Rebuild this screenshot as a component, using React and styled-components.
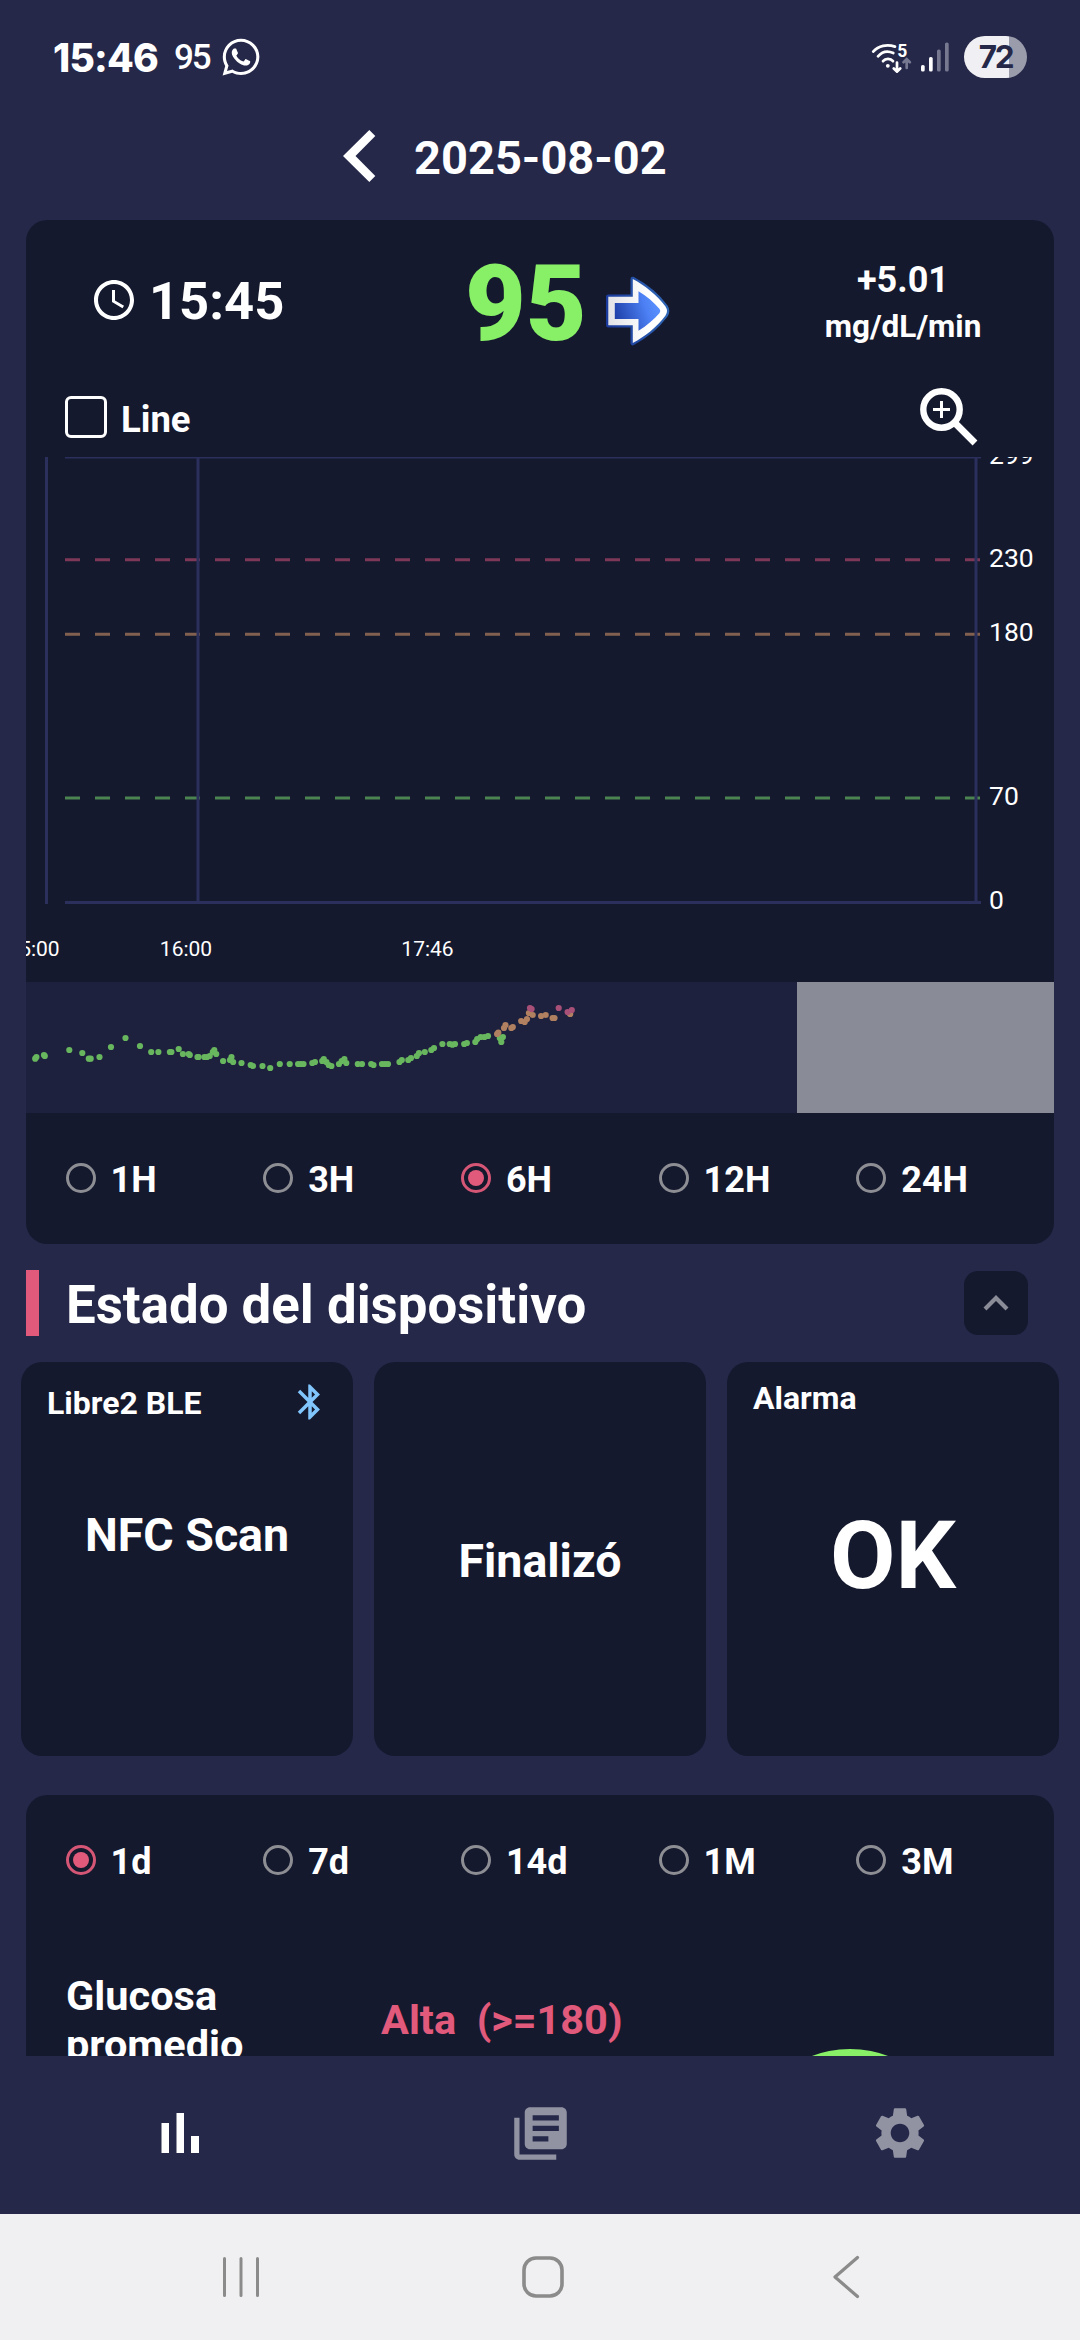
import { useState } from 'react'
import styled, { createGlobalStyle } from 'styled-components'
import { FaWhatsapp } from 'react-icons/fa'
import { MdAccessTime, MdBluetooth, MdLibraryBooks, MdSettings } from 'react-icons/md'

const GlobalStyle = createGlobalStyle`
  * {
    box-sizing: border-box;
  }

  body {
    margin: 0;
    background-color: #252849;
    color: #fff;
    font-family: Roboto, "Liberation Sans", sans-serif;
  }

  svg {
    display: block;
    flex-shrink: 0;
  }
`

const Screen = styled.div`
  display: flex;
  flex-direction: column;
  width: 1080px;
  height: 2340px;
  overflow: hidden;
  background-color: #252849;
`

/* ---------- status bar ---------- */

const StatusBar = styled.div`
  display: flex;
  justify-content: space-between;
  align-items: center;
  height: 114px;
  padding: 0 53px 0 53px;
  flex-shrink: 0;
`

const StatusGroup = styled.div`
  display: flex;
  align-items: center;
`

const StatusTime = styled.span`
  width: 121px;
  font-family: Inter, sans-serif;
  font-size: 39px;
  font-weight: 800;
  letter-spacing: -0.8px;
`

const StatusValue = styled.span`
  width: 46px;
  font-size: 35px;
  font-weight: 500;
  letter-spacing: -2.2px;
`

const Battery = styled.div`
  width: 63px;
  height: 42px;
  margin-left: 14px;
  border-radius: 21px;
  background: linear-gradient(to right, #f0f0f4 45px, #9a9bab 45px);
  color: #252849;
  font-family: Inter, sans-serif;
  font-size: 31.5px;
  font-weight: 700;
  line-height: 41px;
  letter-spacing: -2.4px;
  text-align: center;
`

/* ---------- date header ---------- */

const DateBar = styled.header`
  display: flex;
  align-items: center;
  height: 106px;
  padding: 0 0 22px 343px;
  gap: 38px;
  flex-shrink: 0;
`

const DateText = styled.h1`
  margin: 4px 0 0;
  font-size: 47px;
  font-weight: 700;
  line-height: 56px;
`

/* ---------- scroll area ---------- */

const Content = styled.main`
  display: flex;
  flex-direction: column;
  height: 1836px;
  overflow: hidden;
  flex-shrink: 0;
`

const Panel = styled.section`
  margin: 0 26px;
  border-radius: 21px;
  background-color: #15192e;
  overflow: hidden;
  flex-shrink: 0;
`

const Reading = styled.div`
  display: flex;
  align-items: center;
  height: 160px;
  padding-left: 64px;
`

const ReadingTime = styled.div`
  display: flex;
  align-items: center;
  gap: 11px;
  width: 375px;
  font-size: 52.5px;
  font-weight: 700;
  line-height: 60px;
`

const TimeText = styled.span`
  padding-top: 2px;
`

const ReadingValue = styled.div`
  display: flex;
  align-items: center;
  gap: 17px;
  width: 320px;
  padding-top: 10px;
  color: #87f067;
  font-size: 105px;
  font-weight: 900;
  line-height: 110px;

  svg {
    margin-top: 11px;
  }
`

const ReadingChange = styled.div`
  display: flex;
  flex-direction: column;
  align-items: center;
  width: 236px;
  padding-top: 5px;
  font-weight: 700;
`

const Change = styled.span`
  font-size: 36px;
  line-height: 48px;
`

const Unit = styled.span`
  font-size: 31.5px;
  line-height: 46px;
`

const ChartTools = styled.div`
  display: flex;
  justify-content: space-between;
  align-items: center;
  height: 77px;
  padding: 0 76px 3px 39px;
`

const CheckLabel = styled.label`
  display: flex;
  align-items: center;
  gap: 14px;
  font-size: 36.5px;
  font-weight: 700;
`

const CheckBox = styled.span`
  width: 42px;
  height: 42px;
  border: 3px solid #fff;
  border-radius: 6px;
`

const CheckText = styled.span`
  padding-top: 5px;
`

const Overview = styled.div`
  display: flex;
  justify-content: space-between;
  height: 131px;
  background-color: #1e213e;
`

const OverviewWindow = styled.div`
  width: 257px;
  background-color: #898b96;
`

const RadioRow = styled.div`
  display: flex;
  height: 131px;
  padding-left: 39.5px;
`

const RadioOption = styled.button`
  display: flex;
  align-items: center;
  gap: 15px;
  width: 197.8px;
  padding: 0;
  border: none;
  background: none;
  color: #fff;
  font-family: inherit;
  font-size: 36px;
  font-weight: 700;
  cursor: pointer;
`

const RadioLabel = styled.span`
  padding-top: 2px;
`

const RadioMark = styled.span`
  display: flex;
  align-items: center;
  justify-content: center;
  width: 30px;
  height: 30px;
  margin-top: -2px;
  border: 3px solid ${props => (props.$on ? '#d65676' : '#8d8e94')};
  border-radius: 50%;

  &::after {
    content: '';
    width: 16px;
    height: 16px;
    border-radius: 50%;
    background-color: ${props => (props.$on ? '#e15a7c' : 'transparent')};
  }
`

/* ---------- device state ---------- */

const SectionHeader = styled.div`
  display: flex;
  align-items: center;
  height: 66px;
  margin: 26px 52px 26px 26px;
  border-left: 13px solid #e15a7c;
  flex-shrink: 0;
`

const SectionTitle = styled.h2`
  flex: 1;
  margin: 4px 0 0 27px;
  font-size: 52.8px;
  font-weight: 700;
  line-height: 62px;
`

const CollapseButton = styled.button`
  display: flex;
  align-items: center;
  justify-content: center;
  width: 64px;
  height: 64px;
  padding: 0;
  border: none;
  border-radius: 14px;
  background-color: #15192e;
  cursor: pointer;
`

const DeviceGrid = styled.div`
  display: grid;
  grid-template-columns: repeat(3, 332px);
  gap: 21px;
  height: 394px;
  margin: 0 21px 39px;
  flex-shrink: 0;
`

const DeviceCard = styled.div`
  display: flex;
  flex-direction: column;
  border-radius: 21px;
  background-color: #15192e;
  text-align: center;
  font-weight: 700;
`

const DeviceTop = styled.div`
  display: flex;
  justify-content: space-between;
  align-items: center;
  height: ${props => props.$height}px;
  padding: 0 22px 0 26px;
  font-size: 32px;

  svg {
    margin-top: -3px;
  }
`

const DeviceText = styled.div`
  margin-top: ${props => props.$top}px;
  font-size: ${props => props.$size || 46.5}px;
  line-height: 60px;
`

/* ---------- statistics ---------- */

const Stats = styled.div`
  display: grid;
  grid-template-columns: 315px 355px 1fr;
  height: 300px;
  padding: 45px 0 0 40px;
  font-size: 41.5px;
  font-weight: 700;
  line-height: 49px;
`

const StatName = styled.div`
  width: 220px;
`

const StatRange = styled.div`
  padding-top: 24px;
  color: #e15a7c;
  white-space: pre;
`

const Pie = styled.div`
  width: 214px;
  height: 214px;
  margin: 78px 0 0 7px;
  border-radius: 50%;
  background-color: #87f067;
`

/* ---------- bottom bars ---------- */

const TabBar = styled.nav`
  display: grid;
  grid-template-columns: repeat(3, 1fr);
  justify-items: center;
  height: 158px;
  padding-top: 46px;
  flex-shrink: 0;
  color: #9193a3;
`

const BarsTab = styled.div`
  padding-top: 11px;
`

const SystemBar = styled.div`
  display: flex;
  align-items: center;
  justify-content: space-between;
  height: 126px;
  padding: 0 220px 0 222px;
  flex-shrink: 0;
  background-color: #f0f0f2;
`

const ranges = ['1H', '3H', '6H', '12H', '24H']
const periods = ['1d', '7d', '14d', '1M', '3M']

const limits = [
  { value: 230, color: '#7d3858' },
  { value: 180, color: '#82604f' },
  { value: 70, color: '#4b8450' },
]

const history = [
  {
    color: '#68b75f',
    points: [
      [9.2, 76.7], [10.4, 75], [18, 73], [18.8, 74], [43.3, 68], [56.3, 71], [62.8, 76.7], [64.7, 76.7],
      [73.5, 75], [85, 65], [99.5, 56], [114, 64], [125.2, 70], [132.4, 70], [143.9, 70], [145.4, 70],
      [152.7, 67], [156.9, 72], [162.7, 72], [163.8, 73], [171.5, 75], [172.6, 75], [178.4, 75], [181, 75],
      [183.7, 74], [186.8, 70], [188.3, 68], [190.2, 72], [197.1, 79], [204, 78], [205.5, 75], [207.1, 80],
      [215.5, 81], [224.7, 83], [227, 84], [236.5, 84], [244.2, 86], [253.8, 82], [263.7, 82], [272.1, 82],
      [274.8, 82], [277.5, 82], [286.3, 81], [289, 80], [296.2, 79], [297.8, 77], [300.4, 80], [302.7, 83],
      [305.4, 84], [313, 82], [315.7, 79], [318.4, 77], [320.3, 81], [331.8, 82], [336, 82], [345.2, 82],
      [347.5, 83], [356, 82], [359, 82], [362, 82], [373.5, 80], [375.8, 78], [382.3, 78], [385, 76],
      [390.8, 74], [393, 71], [398.8, 70], [405.3, 68], [408, 66], [416.4, 62], [423.7, 62], [426.4, 62.7],
      [429, 62], [438.2, 62], [440.9, 61], [449.3, 60], [451.2, 57], [454.7, 55], [458.5, 55], [462, 54],
      [473.8, 56], [476.9, 55], [475.3, 60],
    ],
  },
  {
    color: '#b08060',
    points: [
      [471.1, 52], [472.3, 50.7], [478, 46], [479.5, 43], [485.3, 46], [486.8, 45], [495.2, 39], [498.7, 40],
      [501, 37], [502.9, 31], [506.7, 33], [515.1, 34], [519.7, 33], [526.6, 36], [528.5, 36], [543.5, 31],
      [544.2, 32],
    ],
  },
  {
    color: '#a85078',
    points: [[504, 26], [505.6, 27], [532.7, 26], [541.6, 30], [545.8, 28]],
  },
]

// pixel row of a glucose value in the main chart
const toY = value => 445.3 - value * 1.4893

const WifiIcon = () => (
  <svg width="50" height="32" viewBox="0 -1 50 32" fill="none" stroke="#fff" strokeWidth="2.7" strokeLinecap="round">
    <path d="M3.2 9.6C8.5 3.5 17 2 25 4.6" />
    <path d="M8 14.3C12 9.7 17.5 8.4 23.3 11" />
    <path d="M13 19.2C15.5 16 20.5 16 23 19.2" />
    <circle cx="17.8" cy="23.8" r="1.9" fill="#fff" stroke="none" />
    <path d="M27 20.5V29M23.8 26.5L27 29.600L30.2 26.5" />
    <path d="M36.7 26V18M33.5 20.2L36.7 17.2L39.9 20.2" stroke="#777990" />
    <text x="27.3" y="14.7" fill="#fff" stroke="none" fontSize="17.5" fontWeight="700">5</text>
  </svg>
)

const SignalIcon = () => (
  <svg width="30" height="30" viewBox="0 0 30 30">
    <rect x="1" y="23" width="3.7" height="6.5" rx="1.6" fill="#fff" />
    <rect x="9" y="15" width="3.7" height="14.5" rx="1.6" fill="#fff" />
    <rect x="17" y="7.5" width="3.7" height="22" rx="1.6" fill="#777990" />
    <rect x="25" y="0.5" width="3.7" height="29" rx="1.6" fill="#777990" />
  </svg>
)

const BackChevron = () => (
  <svg width="33" height="52" viewBox="0 0 33 52">
    <path d="M26.3 0L0 26L26.3 52L32.3 46L12.5 26L32.3 6Z" fill="#fff" />
  </svg>
)

const TrendArrow = () => (
  <svg width="67" height="72" viewBox="0 0 67 72">
    <defs>
      <linearGradient id="rim" x1="0" y1="0.6" x2="1" y2="0.4">
        <stop offset="0" stopColor="#1a3a9c" />
        <stop offset="1" stopColor="#2f66b4" />
      </linearGradient>
      <linearGradient id="frame" x1="0" y1="0" x2="1" y2="0">
        <stop offset="0" stopColor="#e2e3e8" />
        <stop offset="0.7" stopColor="#fff" />
      </linearGradient>
      <linearGradient id="body" x1="0" y1="0.7" x2="1" y2="0.4">
        <stop offset="0" stopColor="#1d3ea6" />
        <stop offset="0.7" stopColor="#4c80f4" />
        <stop offset="1" stopColor="#5b92ff" />
      </linearGradient>
    </defs>
    <path
      d="M4.3 21.7H28.8V4C41 10.5 53 20 61.5 31.5Q64.5 36 61.5 40.5C53 52 41 61.5 28.8 68V50.3H4.3Z"
      fill="url(#frame)"
      stroke="url(#rim)"
      strokeWidth="4.6"
      strokeLinejoin="round"
      paintOrder="stroke"
    />
    <path
      d="M10.8 28H34.5V16.3C43 21.5 50 27.5 55.6 34Q57 36 55.6 38C50 44.5 43 50.5 34.5 55.7V44H10.8Z"
      fill="url(#body)"
    />
  </svg>
)

const ZoomInIcon = () => (
  <svg width="58" height="58" viewBox="0 0 58 58" fill="none" stroke="#fff">
    <circle cx="21.5" cy="21.5" r="18.2" strokeWidth="6.4" />
    <path d="M13 21.5H30M21.5 13V30" strokeWidth="3" />
    <path d="M36 36L55 55" strokeWidth="6.8" />
  </svg>
)

const BarsIcon = () => (
  <svg width="38" height="41" viewBox="0 0 38 41" fill="#fff">
    <rect x="0.5" y="10" width="7.5" height="30" />
    <rect x="15.5" y="0" width="7.5" height="40" />
    <rect x="30" y="23" width="8" height="17" />
  </svg>
)

const GlucoseChart = () => (
  <svg width="1028" height="525" viewBox="0 0 1028 525" fontFamily="Roboto, sans-serif">
    {limits.map(limit => (
      <line
        key={limit.value}
        x1="39"
        x2="954"
        y1={toY(limit.value)}
        y2={toY(limit.value)}
        stroke={limit.color}
        strokeWidth="3"
        strokeDasharray="15 15"
      />
    ))}
    <g stroke="#2b2f5c" strokeWidth="3">
      <path d="M39 0H955M39 445.5H955" />
      <path d="M20.5 0V447M172 0V445M950 0V445" />
    </g>
    <g fill="#fff" fontSize="26.5">
      {[299, ...limits.map(limit => limit.value), 0].map(value => (
        <text key={value} x="963" y={toY(value) + 7}>{value}</text>
      ))}
    </g>
    <g fill="#fff" fontSize="21" textAnchor="middle">
      <text x="7.5" y="498.5">15:00</text>
      <text x="160" y="498.5">16:00</text>
      <text x="401.5" y="498.5">17:46</text>
    </g>
  </svg>
)

const HistoryDots = () => (
  <svg width="771" height="131" viewBox="0 0 771 131">
    {history.map(series => (
      <g key={series.color} fill={series.color}>
        {series.points.map(([x, y]) => <circle key={`${x}-${y}`} cx={x} cy={y} r="3.1" />)}
      </g>
    ))}
  </svg>
)

const RadioGroup = ({ options, value, onChange }) => (
  <RadioRow>
    {options.map(option => (
      <RadioOption key={option} onClick={() => onChange(option)}>
        <RadioMark $on={option === value} />
        <RadioLabel>{option}</RadioLabel>
      </RadioOption>
    ))}
  </RadioRow>
)

const App = () => {
  const [range, setRange] = useState('6H')
  const [period, setPeriod] = useState('1d')

  return (
    <Screen>
      <GlobalStyle />
      <StatusBar>
        <StatusGroup>
          <StatusTime>15:46</StatusTime>
          <StatusValue>95</StatusValue>
          <FaWhatsapp size={42} />
        </StatusGroup>
        <StatusGroup>
          <WifiIcon />
          <SignalIcon />
          <Battery>72</Battery>
        </StatusGroup>
      </StatusBar>

      <DateBar>
        <BackChevron />
        <DateText>2025-08-02</DateText>
      </DateBar>

      <Content>
        <Panel>
          <Reading>
            <ReadingTime>
              <MdAccessTime size={48} />
              <TimeText>15:45</TimeText>
            </ReadingTime>
            <ReadingValue>
              95
              <TrendArrow />
            </ReadingValue>
            <ReadingChange>
              <Change>+5.01</Change>
              <Unit>mg/dL/min</Unit>
            </ReadingChange>
          </Reading>
          <ChartTools>
            <CheckLabel>
              <CheckBox />
              <CheckText>Line</CheckText>
            </CheckLabel>
            <ZoomInIcon />
          </ChartTools>
          <GlucoseChart />
          <Overview>
            <HistoryDots />
            <OverviewWindow />
          </Overview>
          <RadioGroup options={ranges} value={range} onChange={setRange} />
        </Panel>

        <SectionHeader>
          <SectionTitle>Estado del dispositivo</SectionTitle>
          <CollapseButton>
            <svg width="26" height="18" viewBox="0 0 26 18">
              <path d="M2 15L13 4L24 15" fill="none" stroke="#8a8c98" strokeWidth="4.2" />
            </svg>
          </CollapseButton>
        </SectionHeader>

        <DeviceGrid>
          <DeviceCard>
            <DeviceTop $height={82}>
              Libre2 BLE
              <MdBluetooth size={42} color="#80c5fc" />
            </DeviceTop>
            <DeviceText $top={61}>NFC Scan</DeviceText>
          </DeviceCard>
          <DeviceCard>
            <DeviceText $top={169}>Finalizó</DeviceText>
          </DeviceCard>
          <DeviceCard>
            <DeviceTop $height={72}>Alarma</DeviceTop>
            <DeviceText $top={92} $size={95}>OK</DeviceText>
          </DeviceCard>
        </DeviceGrid>

        <Panel>
          <RadioGroup options={periods} value={period} onChange={setPeriod} />
          <Stats>
            <StatName>Glucosa promedio</StatName>
            <StatRange>{'Alta  (>=180)'}</StatRange>
            <Pie />
          </Stats>
        </Panel>
      </Content>

      <TabBar>
        <BarsTab>
          <BarsIcon />
        </BarsTab>
        <MdLibraryBooks size={63} />
        <MdSettings size={62} />
      </TabBar>

      <SystemBar>
        <svg width="38" height="42" viewBox="0 0 38 42" stroke="#8b8b8b" strokeWidth="3" strokeLinecap="round">
          <path d="M2.5 2.5V39.5M19 2.5V39.5M35.5 2.5V39.5" />
        </svg>
        <svg width="44" height="44" viewBox="0 0 44 44">
          <rect x="3" y="3" width="38" height="38" rx="12" fill="none" stroke="#8b8b8b" strokeWidth="3.6" />
        </svg>
        <svg width="34" height="44" viewBox="-6 0 34 44">
          <path d="M25.5 2.5L3 22L25.5 41.5" fill="none" stroke="#8b8b8b" strokeWidth="3.2" strokeLinecap="round" strokeLinejoin="round" />
        </svg>
      </SystemBar>
    </Screen>
  )
}

export default App
